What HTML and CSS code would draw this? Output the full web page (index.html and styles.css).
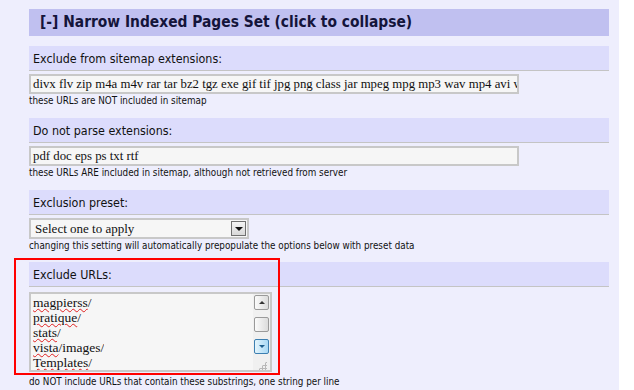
FILE: index.html
```html
<!DOCTYPE html>
<html lang="en">
<head>
  <meta charset="UTF-8" />
  <title>Narrow Indexed Pages Set</title>
  <link rel="stylesheet" href="styles.css">
</head>
<body>
  <div class="page">
    <div class="set-title">[-] Narrow Indexed Pages Set (click to collapse)</div>

    <div class="field">
      <div class="field-label">Exclude from sitemap extensions:</div>
      <div class="text-input wide">divx flv zip m4a m4v rar tar bz2 tgz exe gif tif jpg png class jar mpeg mpg mp3 wav mp4 avi wmv</div>
      <div class="hint">these URLs are NOT included in sitemap</div>
    </div>

    <div class="field">
      <div class="field-label">Do not parse extensions:</div>
      <div class="text-input wide">pdf doc eps ps txt rtf</div>
      <div class="hint">these URLs ARE included in sitemap, although not retrieved from server</div>
    </div>

    <div class="field">
      <div class="field-label">Exclusion preset:</div>
      <div class="select-box">
        <span class="select-text">Select one to apply</span>
        <span class="select-btn"><span class="arrow-down"></span></span>
      </div>
      <div class="hint">changing this setting will automatically prepopulate the options below with preset data</div>
    </div>

    <div class="field last">
      <div class="field-label">Exclude URLs:</div>
      <div class="textarea">
        <div class="lines">
          <div><span class="typo">magpierss</span>/</div>
          <div><span class="typo">pratique</span>/</div>
          <div><span class="typo">stats</span>/</div>
          <div><span class="typo">vista</span>/images/</div>
          <div><span class="typo">Templates</span>/</div>
        </div>
        <div class="scrollbar">
          <span class="sb-btn"><span class="arrow-up"></span></span>
          <span class="sb-thumb"></span>
          <span class="sb-btn hot"><span class="arrow-down small"></span></span>
          <span class="grip"></span>
        </div>
      </div>
      <div class="hint">do NOT include URLs that contain these substrings, one string per line</div>
      <div class="highlight"></div>
    </div>
  </div>
</body>
</html>
```

FILE: styles.css
```css
body {
  margin: 0;
  background: #ffffff;
  font-family: 'DejaVu Sans', sans-serif;
  color: #000;
}

.page {
  width: 619px;
  height: 390px;
  padding: 9px 0 0 29px;
  box-sizing: border-box;
  background: #eeeefd;
  overflow: hidden;
}

.set-title {
  width: 580px;
  height: 27px;
  box-sizing: border-box;
  padding-left: 11px;
  background: #c0c0f0;
  color: #14143a;
  font-family: 'DejaVu Sans Condensed', 'DejaVu Sans', sans-serif;
  font-weight: bold;
  font-size: 15.4px;
  line-height: 26px;
  margin-bottom: 10px;
}

.field {
  position: relative;
  width: 580px;
  height: 72px;
}

.field-label {
  height: 24px;
  background: #dcdcfc;
  border-bottom: 1px solid #c4c4c4;
  padding-left: 4px;
  font-size: 12.4px;
  font-family: 'DejaVu Sans Condensed', 'DejaVu Sans', sans-serif;
  line-height: 25px;
  color: #111;
}

.text-input {
  margin-top: 3px;
  height: 20px;
  box-sizing: border-box;
  border: 2px solid #c8c8c8;
  background: #f6f6f6;
  font-family: 'Liberation Serif', serif;
  font-size: 12.8px;
  line-height: 16px;
  padding-left: 2px;
  white-space: nowrap;
  overflow: hidden;
  color: #111;
}

.wide {
  width: 490px;
}

.hint {
  font-size: 9.8px;
  font-family: 'DejaVu Sans Condensed', 'DejaVu Sans', sans-serif;
  line-height: 14px;
  color: #111;
  white-space: nowrap;
}

.select-box {
  margin-top: 3px;
  width: 220px;
  height: 21px;
  box-sizing: border-box;
  border: 2px solid #c8c8c8;
  background: #f6f6f6;
  display: flex;
  align-items: center;
  justify-content: space-between;
  padding: 0 1px 0 4px;
}

.select-text {
  font-family: 'Liberation Serif', serif;
  font-size: 13px;
  color: #111;
}

.select-btn {
  width: 15px;
  height: 15px;
  box-sizing: border-box;
  border: 1px solid #707070;
  background: linear-gradient(#f4f4f4, #d8d8d8);
  display: flex;
  align-items: center;
  justify-content: center;
}

.arrow-down {
  width: 0;
  height: 0;
  border-left: 4px solid transparent;
  border-right: 4px solid transparent;
  border-top: 4px solid #111;
}

.arrow-down.small {
  border-left-width: 3px;
  border-right-width: 3px;
  border-top: 3px solid #1e5f8e;
}

.arrow-up {
  width: 0;
  height: 0;
  border-left: 3px solid transparent;
  border-right: 3px solid transparent;
  border-bottom: 3px solid #333;
}

.field.last {
  height: auto;
}

.textarea {
  margin-top: 5px;
  width: 243px;
  height: 80px;
  box-sizing: border-box;
  border: 2px solid #c8c8c8;
  background: #f6f6f6;
  display: flex;
  justify-content: space-between;
}

.lines {
  padding: 1px 0 0 2px;
  font-family: 'Liberation Serif', serif;
  font-size: 13.5px;
  line-height: 15px;
  color: #111;
  overflow: hidden;
}

.typo {
  text-decoration: underline wavy #e02020;
  text-decoration-thickness: 1px;
  text-underline-offset: 1px;
}

.scrollbar {
  width: 17px;
  background: #f0f0f0;
  display: flex;
  flex-direction: column;
  align-items: center;
  padding-top: 1px;
  gap: 7px;
}

.sb-btn,
.sb-thumb {
  width: 15px;
  height: 15px;
  box-sizing: border-box;
  border: 1px solid #9a9a9a;
  border-radius: 2px;
  background: linear-gradient(to right, #fbfbfb, #dcdcdc);
  display: flex;
  align-items: center;
  justify-content: center;
}

.sb-btn.hot {
  border-color: #3c7fb1;
  background: linear-gradient(to right, #e3f4fc, #a9d9f5);
}

.grip {
  width: 9px;
  height: 9px;
  margin: 0 0 0 2px;
  background-image: radial-gradient(circle, #b8b8b8 1px, transparent 1.2px);
  background-size: 3px 3px;
  clip-path: polygon(100% 0, 100% 100%, 0 100%);
}

.field.last .hint {
  margin-top: 3px;
}

.highlight {
  position: absolute;
  left: -15px;
  top: -4px;
  width: 266px;
  height: 117px;
  box-sizing: border-box;
  border: 2px solid #f00;
}
```
